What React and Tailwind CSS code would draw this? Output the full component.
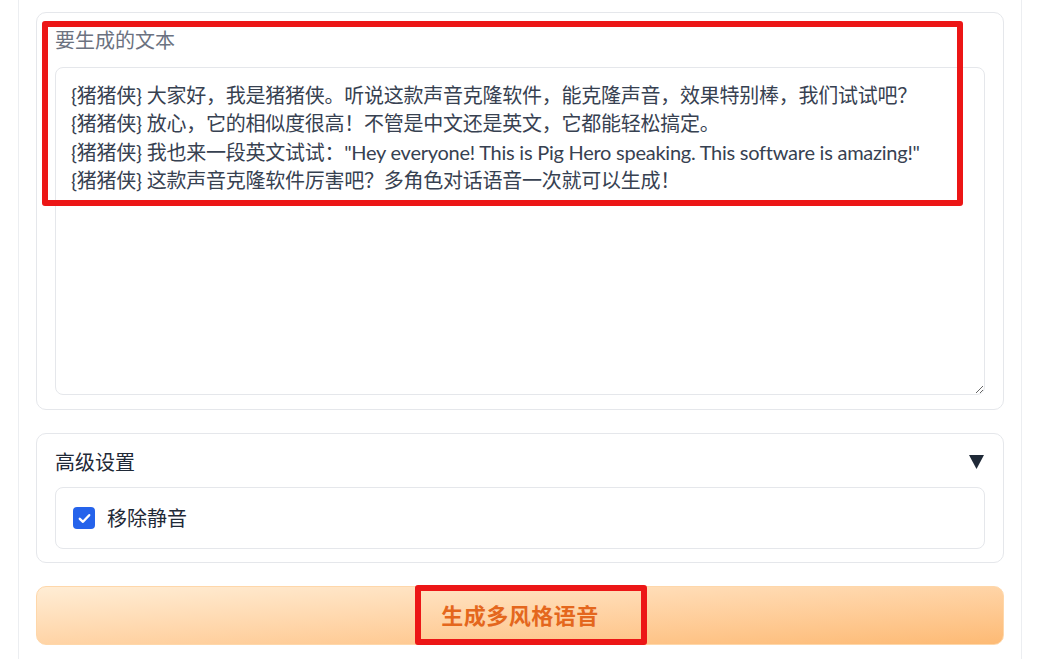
import React from "react";

const FONT = "font-['Source_Sans_Pro','Lato','Noto_Sans_CJK_SC',sans-serif]";

const TEXT = `{猪猪侠} 大家好，我是猪猪侠。听说这款声音克隆软件，能克隆声音，效果特别棒，我们试试吧？
{猪猪侠} 放心，它的相似度很高！不管是中文还是英文，它都能轻松搞定。
{猪猪侠} 我也来一段英文试试："Hey everyone! This is Pig Hero speaking. This software is amazing!"
{猪猪侠} 这款声音克隆软件厉害吧？多角色对话语音一次就可以生成！`;

export default function App() {
  return (
    <div className={`relative w-[1043px] h-[659px] overflow-hidden bg-white ${FONT}`}>
      <div className="ml-[18px] w-[1004px] h-full border-x border-[#eceef1] px-[17px] pt-[12px] flex flex-col gap-[23px]">
        {/* Text card */}
        <div className="h-[398px] rounded-[10px] border border-[#e5e7eb] px-[18px] pt-[13px] pb-[14px] flex flex-col">
          <div className="h-[28px] text-[20px] leading-[28px] text-[#6b7280]">要生成的文本</div>
          <textarea
            className={`mt-[13px] h-[328px] w-full rounded-[8px] border border-[#e5e7eb] bg-white px-[15px] pt-[13px] pb-[10px] text-[20px] leading-[28.3px] tracking-[-0.25px] text-[#374151] outline-none resize-y ${FONT}`}
            defaultValue={TEXT}
            spellCheck={false}
          />
        </div>

        {/* Advanced settings card */}
        <div className="h-[130px] rounded-[10px] border border-[#e5e7eb] px-[18px] pt-[14px] pb-[13px] flex flex-col">
          <div className="h-[28px] flex items-center justify-between">
            <span className="text-[20px] leading-[28px] text-[#1f2937]">高级设置</span>
            <svg width="15" height="14" viewBox="0 0 15 14" className="mr-[1px]">
              <polygon points="0,0 15,0 7.5,14" fill="#1f2937" />
            </svg>
          </div>
          <div className="mt-[11px] h-[62px] rounded-[8px] border border-[#e5e7eb] pl-[17px] flex items-center gap-[12px]">
            <span className="w-[22px] h-[22px] rounded-[4px] bg-[#2563eb] flex items-center justify-center">
              <svg width="13" height="11" viewBox="0 0 13 11">
                <path d="M1.8 5.8 L5 8.8 L11.2 2.2" fill="none" stroke="white" strokeWidth="2.4" strokeLinecap="round" strokeLinejoin="round" />
              </svg>
            </span>
            <span className="text-[20px] leading-[28px] text-[#1f2937]">移除静音</span>
          </div>
        </div>

        {/* Primary button */}
        <button className="h-[59px] w-full rounded-[10px] border border-[#fed7aa] bg-gradient-to-br from-[#ffedd5] to-[#fdba74] flex items-center justify-center">
          <span className="text-[22px] font-bold text-[#e4671d] tracking-[0.5px]">生成多风格语音</span>
        </button>
      </div>

      {/* Annotation boxes */}
      <div className="absolute left-[42px] top-[21px] w-[921px] h-[185px] border-[6px] border-[#ec1616] rounded-[3px] pointer-events-none" />
      <div className="absolute left-[415px] top-[585px] w-[232px] h-[60px] border-[6px] border-[#ec1616] rounded-[3px] pointer-events-none" />
    </div>
  );
}
